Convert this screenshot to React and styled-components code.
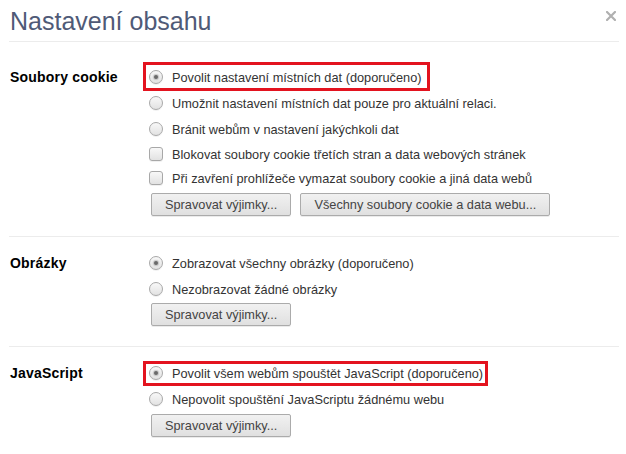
import React from "react";
import styled, { createGlobalStyle } from "styled-components";

const GlobalStyle = createGlobalStyle`
  html, body { margin: 0; padding: 0; background: #fff; }
  body { font-family: "Liberation Sans", Arial, sans-serif; }
`;

const Page = styled.div`
  width: 626px;
  box-sizing: border-box;
  padding: 0 7px 0 9px;
`;

const Header = styled.header`
  display: flex;
  justify-content: space-between;
  align-items: flex-start;
  height: 42px;
  box-sizing: border-box;
  border-bottom: 1px solid #ececec;
  margin-bottom: 9px;
`;

const Title = styled.h1`
  margin: 0;
  padding: 7px 0 0 1px;
  font-size: 25px;
  font-weight: normal;
  line-height: 28px;
  color: #4f5a77;
`;

const Close = styled.button`
  border: 0;
  background: none;
  padding: 0;
  margin: 11px 3px 0 0;
  width: 10px;
  height: 10px;
  display: flex;
  cursor: pointer;
`;

const Section = styled.section`
  display: flex;
  padding: 13px 0 20px;
  border-bottom: ${(p) => (p.$last ? "none" : "1px solid #ececec")};
`;

const Label = styled.div`
  width: 140px;
  flex: none;
  padding-left: 1px;
  box-sizing: border-box;
  font-size: 14px;
  font-weight: bold;
  line-height: 26px;
  letter-spacing: 0.2px;
  color: #000;
`;

const Content = styled.div`
  display: flex;
  flex-direction: column;
  align-items: flex-start;
`;

const Option = styled.label`
  position: relative;
  display: inline-flex;
  align-items: center;
  gap: 9px;
  height: ${(p) => (p.$check ? "24px" : "26px")};
  font-size: 12.75px;
  color: #333;
  ${(p) =>
    p.$highlight
      ? `&::after {
          content: "";
          position: absolute;
          top: ${p.$highlight.top}px;
          bottom: ${p.$highlight.bottom}px;
          left: -6px;
          right: ${p.$highlight.right}px;
          border: 3px solid #e3131f;
          pointer-events: none;
        }`
      : ""}
`;

const Radio = styled.span`
  width: 14px;
  height: 14px;
  box-sizing: border-box;
  border-radius: 50%;
  border: 1px solid #a8a8a8;
  background: linear-gradient(#f8f8f8, #e2e2e2);
  box-shadow: 0 1px 0 rgba(0, 0, 0, 0.06);
  display: flex;
  align-items: center;
  justify-content: center;
  flex: none;
  &::before {
    content: "";
    width: 4px;
    height: 4px;
    border-radius: 50%;
    background: ${(p) => (p.$checked ? "#6a6a6a" : "transparent")};
    box-shadow: ${(p) => (p.$checked ? "0 0 1px 1px rgba(120,120,120,0.35)" : "none")};
  }
`;

const Check = styled.span`
  width: 14px;
  height: 14px;
  box-sizing: border-box;
  border-radius: 3px;
  border: 1px solid #a8a8a8;
  background: linear-gradient(#f8f8f8, #e2e2e2);
  box-shadow: 0 1px 0 rgba(0, 0, 0, 0.06);
  flex: none;
`;

const Buttons = styled.div`
  display: flex;
  gap: 9px;
  margin-top: ${(p) => p.$top}px;
  padding-left: 2px;
`;

const Button = styled.button`
  height: 23px;
  padding: 0 13px;
  border: 1px solid #ababab;
  border-radius: 2px;
  background: linear-gradient(#f1f1f1, #e0e0e0);
  box-shadow: 0 1px 0 rgba(0, 0, 0, 0.08);
  font-family: "Liberation Sans", Arial, sans-serif;
  font-size: 12.75px;
  color: #444;
  cursor: pointer;
`;

function CloseIcon() {
  return (
    <svg width="10" height="10" viewBox="0 0 10 10">
      <path d="M1 1 L9 9 M9 1 L1 9" stroke="#b0b0b0" strokeWidth="2.2" strokeLinecap="square" />
    </svg>
  );
}

export default function App() {
  return (
    <Page>
      <GlobalStyle />
      <Header>
        <Title>Nastavení obsahu</Title>
        <Close aria-label="Zavřít">
          <CloseIcon />
        </Close>
      </Header>

      <Section>
        <Label>Soubory cookie</Label>
        <Content>
          <Option $highlight={{ top: -2, bottom: -1, right: -9 }}>
            <Radio $checked />
            Povolit nastavení místních dat (doporučeno)
          </Option>
          <Option>
            <Radio />
            Umožnit nastavení místních dat pouze pro aktuální relaci.
          </Option>
          <Option>
            <Radio />
            Bránit webům v nastavení jakýchkoli dat
          </Option>
          <Option $check>
            <Check />
            Blokovat soubory cookie třetích stran a data webových stránek
          </Option>
          <Option $check>
            <Check />
            Při zavření prohlížeče vymazat soubory cookie a jiná data webů
          </Option>
          <Buttons $top={3}>
            <Button>Spravovat výjimky...</Button>
            <Button>Všechny soubory cookie a data webu...</Button>
          </Buttons>
        </Content>
      </Section>

      <Section>
        <Label>Obrázky</Label>
        <Content>
          <Option>
            <Radio $checked />
            Zobrazovat všechny obrázky (doporučeno)
          </Option>
          <Option>
            <Radio />
            Nezobrazovat žádné obrázky
          </Option>
          <Buttons $top={1}>
            <Button>Spravovat výjimky...</Button>
          </Buttons>
        </Content>
      </Section>

      <Section $last>
        <Label>JavaScript</Label>
        <Content>
          <Option $highlight={{ top: 1, bottom: 0, right: -5 }}>
            <Radio $checked />
            Povolit všem webům spouštět JavaScript (doporučeno)
          </Option>
          <Option>
            <Radio />
            Nepovolit spouštění JavaScriptu žádnému webu
          </Option>
          <Buttons $top={2}>
            <Button>Spravovat výjimky...</Button>
          </Buttons>
        </Content>
      </Section>
    </Page>
  );
}
